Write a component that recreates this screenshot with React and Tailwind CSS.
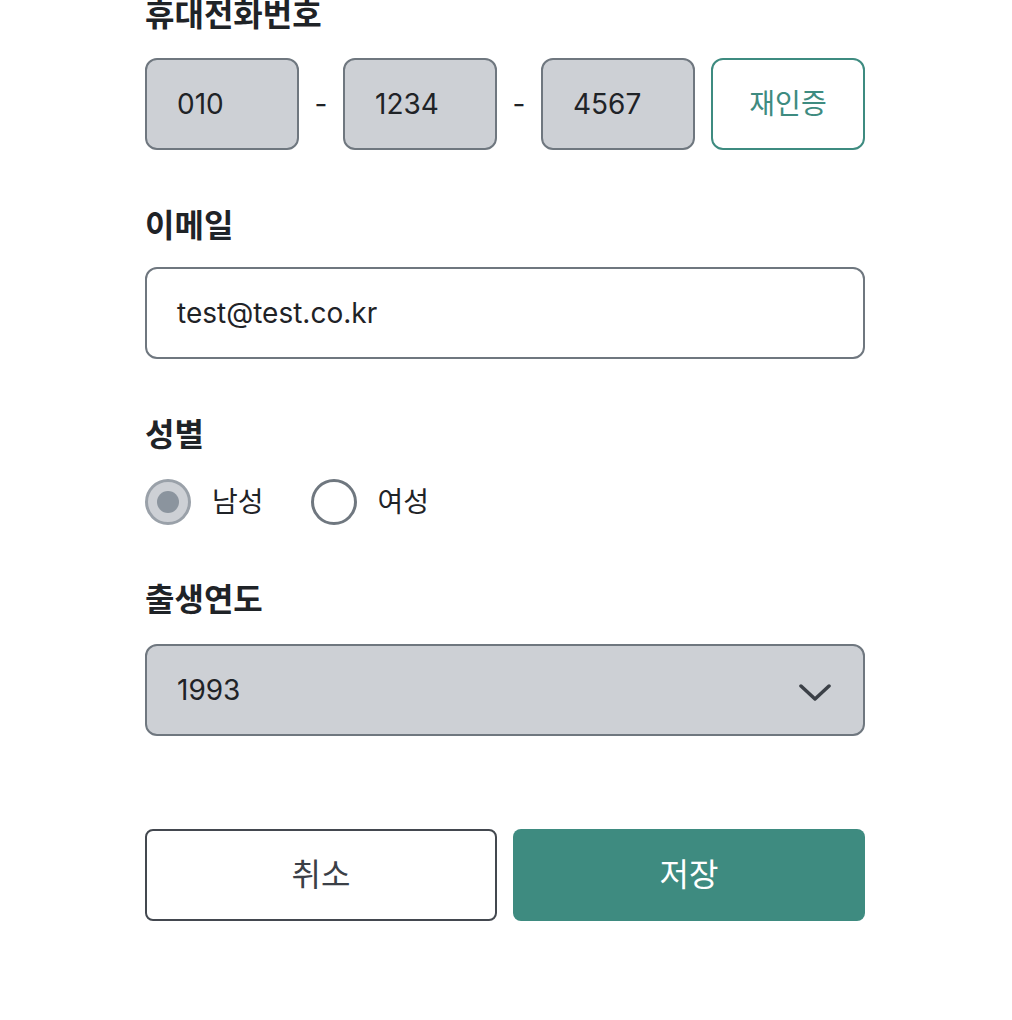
import React, { useState } from 'react';

const font = { fontFamily: "Inter, 'Noto Sans CJK KR', sans-serif" };

const Label = ({ children, className = '' }) => (
  <p className={`text-[32px] leading-[30px] font-bold text-[#1f2327] ${className}`}>{children}</p>
);

const ProfileForm = () => {
  const [gender, setGender] = useState('male');
  const [year, setYear] = useState('1993');

  const years = [];
  for (let y = 2010; y >= 1950; y--) years.push(String(y));

  return (
    <div className="min-h-screen bg-white" style={font}>
      <div className="w-[720px] ml-[145px] flex flex-col">
        {/* Phone */}
        <Label>휴대전화번호</Label>
        <div className="mt-[28px] flex items-center">
          <div className="w-[154px] h-[92px] rounded-xl border-2 border-[#6f777f] bg-[#cdd0d5] flex items-center px-[30px] text-[28px] text-[#1f2327]">010</div>
          <span className="w-[44px] text-center text-[28px] text-[#1f2327]">-</span>
          <div className="w-[154px] h-[92px] rounded-xl border-2 border-[#6f777f] bg-[#cdd0d5] flex items-center px-[30px] text-[28px] text-[#1f2327]">1234</div>
          <span className="w-[44px] text-center text-[28px] text-[#1f2327]">-</span>
          <div className="w-[154px] h-[92px] rounded-xl border-2 border-[#6f777f] bg-[#cdd0d5] flex items-center px-[30px] text-[28px] text-[#1f2327]">4567</div>
          <button className="ml-4 w-[154px] h-[92px] rounded-xl border-2 border-[#3e8b80] bg-white text-[28px] text-[#3e8b80]">재인증</button>
        </div>

        {/* Email */}
        <Label className="mt-[61px]">이메일</Label>
        <div className="mt-[26px] h-[92px] rounded-xl border-2 border-[#6f777f] bg-white flex items-center px-[30px] text-[28px] text-[#1f2327]">
          test@test.co.kr
        </div>

        {/* Gender */}
        <Label className="mt-[61px]">성별</Label>
        <div className="mt-[28px] h-[48px] flex items-center">
          {[
            { id: 'male', name: '남성' },
            { id: 'female', name: '여성' },
          ].map((g) => (
            <button key={g.id} onClick={() => setGender(g.id)} className="flex items-center mr-[47px]">
              {gender === g.id ? (
                <span className="w-[46px] h-[46px] rounded-full border-[3px] border-[#9aa1a9] bg-[#cdd0d5] flex items-center justify-center">
                  <span className="w-[22px] h-[22px] rounded-full bg-[#8b949e]" />
                </span>
              ) : (
                <span className="w-[46px] h-[46px] rounded-full border-[3px] border-[#6f777f] bg-white" />
              )}
              <span className="ml-[21px] text-[28px] text-[#1f2327]">{g.name}</span>
            </button>
          ))}
        </div>

        {/* Birth year */}
        <Label className="mt-[59px]">출생연도</Label>
        <div className="mt-[29px] relative">
          <select
            value={year}
            onChange={(e) => setYear(e.target.value)}
            className="w-full h-[92px] appearance-none rounded-xl border-2 border-[#6f777f] bg-[#cdd0d5] px-[30px] text-[28px] text-[#1f2327] outline-none"
          >
            {years.map((y) => (
              <option key={y} value={y}>{y}</option>
            ))}
          </select>
          <svg className="absolute right-[34px] top-[39px] pointer-events-none" width="32" height="20" viewBox="0 0 32 20" fill="none">
            <path d="M2 3l14 13L30 3" stroke="#3b4047" strokeWidth="3.5" strokeLinecap="round" strokeLinejoin="round" />
          </svg>
        </div>

        {/* Actions */}
        <div className="mt-[93px] grid grid-cols-2 gap-4">
          <button className="h-[92px] rounded-lg border-2 border-[#43484f] bg-white text-[32px] text-[#3b4047]">취소</button>
          <button className="h-[92px] rounded-lg bg-[#3e8b80] text-[32px] text-white">저장</button>
        </div>
      </div>
    </div>
  );
};

export default function App() {
  return <ProfileForm />;
}
